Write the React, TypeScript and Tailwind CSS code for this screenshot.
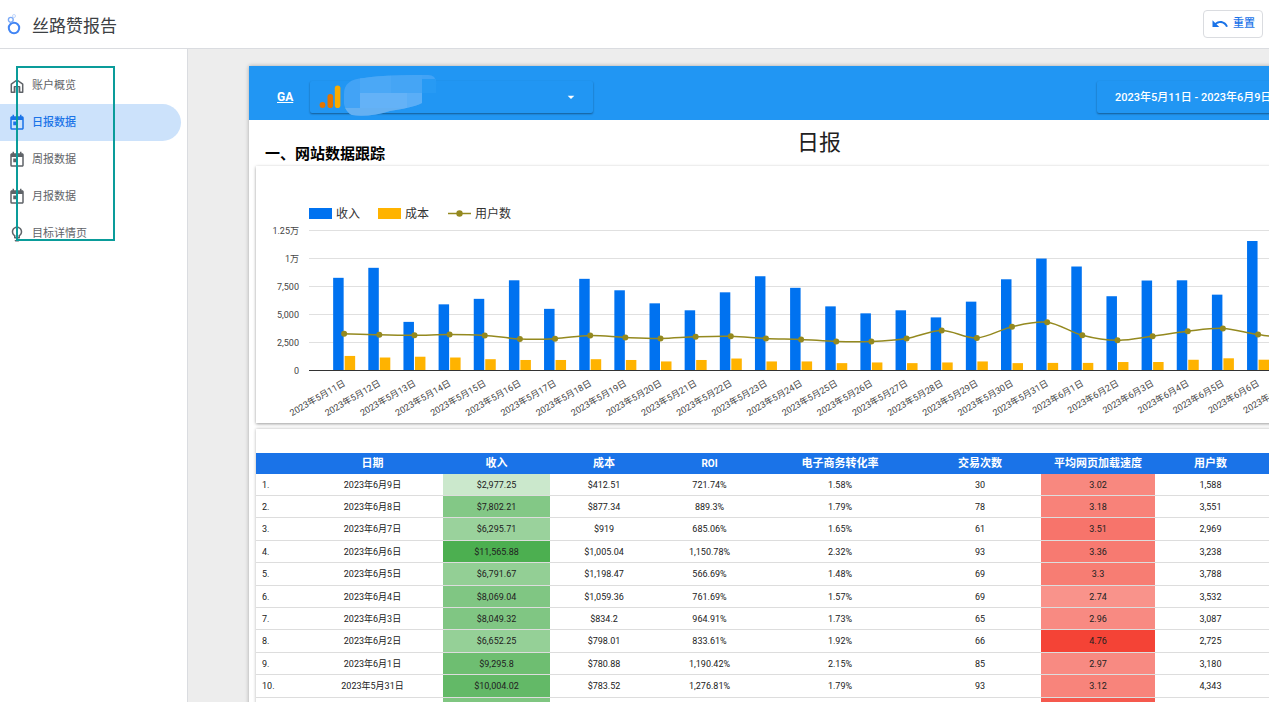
import { MdArrowDropDown, MdLightbulbOutline, MdToday, MdUndo } from 'react-icons/md'

interface DailyPoint {
  date: string
  revenue: number
  cost: number
  users: number
}

interface ReportRow {
  date: string
  revenue: number
  cost: string
  roi: string
  conversion: string
  orders: number
  speed: number
  users: string
}

const daily: DailyPoint[] = [
  { date: '2023年5月11日', revenue: 8290, cost: 1340, users: 3325 },
  { date: '2023年5月12日', revenue: 9180, cost: 1200, users: 3218 },
  { date: '2023年5月13日', revenue: 4370, cost: 1270, users: 3174 },
  { date: '2023年5月14日', revenue: 5930, cost: 1200, users: 3254 },
  { date: '2023年5月15日', revenue: 6420, cost: 1050, users: 3165 },
  { date: '2023年5月16日', revenue: 8070, cost: 980, users: 2853 },
  { date: '2023年5月17日', revenue: 5530, cost: 980, users: 2880 },
  { date: '2023年5月18日', revenue: 8200, cost: 1050, users: 3165 },
  { date: '2023年5月19日', revenue: 7180, cost: 980, users: 2987 },
  { date: '2023年5月20日', revenue: 6020, cost: 850, users: 2898 },
  { date: '2023年5月21日', revenue: 5400, cost: 980, users: 3049 },
  { date: '2023年5月22日', revenue: 7000, cost: 1110, users: 3094 },
  { date: '2023年5月23日', revenue: 8430, cost: 850, users: 2898 },
  { date: '2023年5月24日', revenue: 7400, cost: 850, users: 2809 },
  { date: '2023年5月25日', revenue: 5750, cost: 700, users: 2630 },
  { date: '2023年5月26日', revenue: 5130, cost: 760, users: 2630 },
  { date: '2023年5月27日', revenue: 5400, cost: 700, users: 2898 },
  { date: '2023年5月28日', revenue: 4770, cost: 760, users: 3611 },
  { date: '2023年5月29日', revenue: 6170, cost: 850, users: 2942 },
  { date: '2023年5月30日', revenue: 8160, cost: 700, users: 3941 },
  { date: '2023年5月31日', revenue: 10004, cost: 720, users: 4343 },
  { date: '2023年6月1日', revenue: 9296, cost: 720, users: 3180 },
  { date: '2023年6月2日', revenue: 6652, cost: 798, users: 2725 },
  { date: '2023年6月3日', revenue: 8049, cost: 800, users: 3087 },
  { date: '2023年6月4日', revenue: 8069, cost: 1000, users: 3532 },
  { date: '2023年6月5日', revenue: 6792, cost: 1130, users: 3788 },
  { date: '2023年6月6日', revenue: 11566, cost: 1005, users: 3238 },
  { date: '2023年6月7日', revenue: 6296, cost: 919, users: 2969 },
  { date: '2023年6月8日', revenue: 7802, cost: 877, users: 3551 },
  { date: '2023年6月9日', revenue: 2977, cost: 413, users: 1588 },
]

const rows: ReportRow[] = [
  { date: '2023年6月9日', revenue: 2977.25, cost: '$412.51', roi: '721.74%', conversion: '1.58%', orders: 30, speed: 3.02, users: '1,588' },
  { date: '2023年6月8日', revenue: 7802.21, cost: '$877.34', roi: '889.3%', conversion: '1.79%', orders: 78, speed: 3.18, users: '3,551' },
  { date: '2023年6月7日', revenue: 6295.71, cost: '$919', roi: '685.06%', conversion: '1.65%', orders: 61, speed: 3.51, users: '2,969' },
  { date: '2023年6月6日', revenue: 11565.88, cost: '$1,005.04', roi: '1,150.78%', conversion: '2.32%', orders: 93, speed: 3.36, users: '3,238' },
  { date: '2023年6月5日', revenue: 6791.67, cost: '$1,198.47', roi: '566.69%', conversion: '1.48%', orders: 69, speed: 3.3, users: '3,788' },
  { date: '2023年6月4日', revenue: 8069.04, cost: '$1,059.36', roi: '761.69%', conversion: '1.57%', orders: 69, speed: 2.74, users: '3,532' },
  { date: '2023年6月3日', revenue: 8049.32, cost: '$834.2', roi: '964.91%', conversion: '1.73%', orders: 65, speed: 2.96, users: '3,087' },
  { date: '2023年6月2日', revenue: 6652.25, cost: '$798.01', roi: '833.61%', conversion: '1.92%', orders: 66, speed: 4.76, users: '2,725' },
  { date: '2023年6月1日', revenue: 9295.8, cost: '$780.88', roi: '1,190.42%', conversion: '2.15%', orders: 85, speed: 2.97, users: '3,180' },
  { date: '2023年5月31日', revenue: 10004.02, cost: '$783.52', roi: '1,276.81%', conversion: '1.79%', orders: 93, speed: 3.12, users: '4,343' },
]

const MAX_REVENUE = 11565.88
const MAX_SPEED = 4.76

function revenueColor(value: number): string {
  return `rgba(76, 175, 80, ${1 - (MAX_REVENUE - value) * 0.0000828})`
}

function speedColor(value: number): string {
  return `rgba(244, 67, 54, ${value / MAX_SPEED})`
}

function HomeIcon() {
  return (
    <svg viewBox="0 0 18 18" className="size-[18px] shrink-0" fill="none" aria-hidden="true">
      <path d="M3.3 15.2V7.2L9 3l5.7 4.2v8h-3.1V9.8H6.4v5.4z" stroke="currentColor" strokeWidth="1.5" strokeLinejoin="round" />
      <path d="M7.6 11h2.8v5H7.6z" fill="currentColor" />
    </svg>
  )
}

const navItems = [
  { label: '账户概览', icon: <HomeIcon /> },
  { label: '日报数据', icon: <MdToday className="size-[18px] shrink-0" />, active: true },
  { label: '周报数据', icon: <MdToday className="size-[18px] shrink-0" /> },
  { label: '月报数据', icon: <MdToday className="size-[18px] shrink-0" /> },
  { label: '目标详情页', icon: <MdLightbulbOutline className="size-[18px] shrink-0" /> },
]

function TopBar() {
  return (
    <header className="flex h-[49px] shrink-0 items-center justify-between border-b border-[#dadce0] pr-[6px] pl-[7px]">
      <div className="flex items-center gap-[11px]">
        <svg viewBox="0 0 14 22" className="h-[22px] w-[14px]" fill="none" aria-hidden="true">
          <circle cx="7" cy="15" r="5.2" stroke="#4285f4" strokeWidth="2" />
          <circle cx="3.8" cy="6.8" r="2.4" stroke="#7baaf7" strokeWidth="1.4" />
          <circle cx="7" cy="3" r="1.5" stroke="#c3d8fb" strokeWidth="1" />
        </svg>
        <h1 className="pt-1 text-[17px] leading-6 text-[#3c4043]">丝路赞报告</h1>
      </div>
      <button
        type="button"
        className="flex h-7 items-center gap-1 rounded border border-[#dadce0] px-[7px] text-[11px] font-medium text-[#1a73e8]"
      >
        <MdUndo className="size-[18px]" />
        <span className="pt-px">重置</span>
      </button>
    </header>
  )
}

function Sidebar() {
  return (
    <nav className="relative w-[188px] shrink-0 border-r border-[#dadce0] bg-white pt-[18px]">
      <ul>
        {navItems.map((item) => (
          <li key={item.label} className="pr-[6px]">
            <a
              href="#"
              aria-current={item.active ? 'page' : undefined}
              className={`flex h-[37px] items-center gap-[6px] rounded-r-full pl-2 text-[11px] ${
                item.active ? 'bg-[#cce2fb] font-medium text-[#1a73e8]' : 'text-[#5f6368]'
              }`}
            >
              {item.icon}
              <span className="pt-[2px]">{item.label}</span>
            </a>
          </li>
        ))}
      </ul>
      {/* highlight frame over the menu */}
      <div className="pointer-events-none absolute top-[17px] left-4 h-[175px] w-[99px] border-2 border-[#0a9c9a]" />
    </nav>
  )
}

function FilterBar() {
  return (
    <div className="flex h-[54px] items-center bg-[#2196f3] pt-2 pl-7 text-white">
      <a href="#" className="w-[33px] text-xs font-bold underline">
        GA
      </a>
      <div className="relative h-8 w-[283px] rounded-xs shadow-[0_1px_2px_rgba(0,0,0,0.4)]">
        <select aria-label="GA" className="h-full w-full appearance-none bg-transparent outline-none">
          <option value="" />
        </select>
        <MdArrowDropDown className="pointer-events-none absolute top-2 right-[14px] size-4" />
        <svg
          viewBox="0 0 130 44"
          className="pointer-events-none absolute -top-[7px] left-0 h-[44px] w-[130px]"
          aria-hidden="true"
        >
          <circle cx="12.5" cy="31" r="2.9" fill="#e37400" />
          <rect x="17.5" y="20" width="5.6" height="14" rx="2.8" fill="#e37400" />
          <rect x="24.8" y="11.5" width="5.6" height="22.5" rx="2.8" fill="#f9ab00" />
          <path d="M35 22v12l3 3z" fill="#9aa55f" />
          <clipPath id="smear">
            <path d="M34 20C34 10 40 5 54 4C72 1 100 1 118 1q9 0 8 10v8h-14v10c-8 4-20 6-32 8c-12 4-28 6-38 4C38 39 35 35 34 30z" />
          </clipPath>
          <g clipPath="url(#smear)">
            <rect width="130" height="44" fill="#42a3f6" />
            <rect x="50" y="0" width="31" height="19" fill="#4ba8f6" />
            <rect x="81" y="0" width="31" height="19" fill="#45a5f5" />
            <rect x="50" y="19" width="47" height="15" fill="#64b2f7" />
            <rect x="97" y="19" width="15" height="15" fill="#5aaef7" />
            <rect x="34" y="34" width="78" height="10" fill="#64b0f2" />
            <rect x="112" y="5" width="18" height="14" fill="#279af4" />
          </g>
        </svg>
      </div>
      <button
        type="button"
        className="mr-2 ml-auto h-8 w-[284px] rounded-xs pt-[2px] pl-[18px] text-left text-[11px] font-medium shadow-[0_1px_2px_rgba(0,0,0,0.4)]"
      >
        2023年5月11日 - 2023年6月9日
      </button>
    </div>
  )
}

// chart geometry, in px inside the card
const PLOT_LEFT = 53
const BASELINE = 205
const STEP = 35.15
const SCALE = 140.5 / 12500

const xAt = (i: number) => PLOT_LEFT + STEP * (i + 1)
const yAt = (value: number) => BASELINE - value * SCALE

function smoothPath(points: [number, number][]): string {
  let d = `M${points[0][0]} ${points[0][1]}`
  for (let i = 0; i < points.length - 1; i++) {
    const prev = points[i - 1] ?? points[i]
    const a = points[i]
    const b = points[i + 1]
    const next = points[i + 2] ?? b
    d += `C${a[0] + (b[0] - prev[0]) / 6} ${a[1] + (b[1] - prev[1]) / 6} ${b[0] - (next[0] - a[0]) / 6} ${b[1] - (next[1] - a[1]) / 6} ${b[0]} ${b[1]}`
  }
  return d
}

const ticks = [
  { value: 12500, label: '1.25万' },
  { value: 10000, label: '1万' },
  { value: 7500, label: '7,500' },
  { value: 5000, label: '5,000' },
  { value: 2500, label: '2,500' },
  { value: 0, label: '0' },
]

function RevenueChart() {
  const line = daily.map((point, i): [number, number] => [xAt(i), yAt(point.users)])

  return (
    <section className="h-[257px] bg-white shadow-[0_1px_3px_rgba(0,0,0,0.4)]">
      <svg width="1126" height="257" role="img" aria-label="收入、成本、用户数">
        <g fontSize="12" fill="#333333">
          <rect x="53" y="42" width="23" height="11" fill="#0072f0" />
          <text x="80" y="52">收入</text>
          <rect x="122" y="42" width="23" height="11" fill="#ffb300" />
          <text x="149" y="52">成本</text>
          <path d="M192 47.5h23" stroke="#94891f" strokeWidth="1.5" />
          <circle cx="203.5" cy="47.5" r="3.2" fill="#94891f" />
          <text x="219" y="52">用户数</text>
        </g>
        {ticks.map((tick) => (
          <g key={tick.value}>
            <path
              d={`M${PLOT_LEFT} ${Math.round(yAt(tick.value)) - 0.5}H1120`}
              stroke={tick.value === 0 ? '#333333' : '#e0e0e0'}
            />
            <text x="43" y={yAt(tick.value) + 3} fontSize="9" fill="#444444" textAnchor="end">
              {tick.label}
            </text>
          </g>
        ))}
        {daily.map((point, i) => (
          <g key={point.date}>
            <rect x={xAt(i) - 11} y={yAt(point.revenue)} width="10.5" height={point.revenue * SCALE - 1} fill="#0072f0" />
            <rect x={xAt(i) + 0.5} y={yAt(point.cost)} width="10.5" height={point.cost * SCALE - 1} fill="#ffb300" />
            <text
              transform={`translate(${xAt(i) + 2} 219) rotate(-30)`}
              fontSize="9"
              fill="#444444"
              textAnchor="end"
            >
              {point.date}
            </text>
          </g>
        ))}
        <path d={smoothPath(line)} fill="none" stroke="#94891f" strokeWidth="1.5" />
        {line.map(([x, y]) => (
          <circle key={x} cx={x} cy={y} r="3" fill="#94891f" />
        ))}
      </svg>
    </section>
  )
}

function ReportTable() {
  return (
    <section className="mt-[6px] bg-white pt-6 shadow-[0_0_3px_rgba(0,0,0,0.3)]">
      <table className="w-full table-fixed border-separate border-spacing-0 text-center text-[9px] leading-3 text-[#212121]">
        <colgroup>
          <col className="w-[46px]" />
          <col className="w-[141px]" />
          <col className="w-[107px]" />
          <col className="w-[108px]" />
          <col className="w-[103px]" />
          <col className="w-[158px]" />
          <col className="w-[122px]" />
          <col className="w-[114px]" />
          <col className="w-[111px]" />
          <col />
        </colgroup>
        <thead>
          <tr className="h-[21px] bg-[#1a73e8] text-[11px] text-white">
            <td />
            <th>日期</th>
            <th>收入</th>
            <th>成本</th>
            <th className="text-[10px]">ROI</th>
            <th>电子商务转化率</th>
            <th>交易次数</th>
            <th>平均网页加载速度</th>
            <th>用户数</th>
            <td />
          </tr>
        </thead>
        <tbody>
          {rows.map((row, i) => (
            <tr key={row.date} className="h-[22px] *:border-b *:border-[#dddddd] nth-[5n]:h-[23px] nth-[5n+3]:h-[23px]">
              <td className="pl-[6px] text-left">{i + 1}.</td>
              <td>{row.date}</td>
              <td style={{ backgroundColor: revenueColor(row.revenue) }}>${row.revenue.toLocaleString('en-US')}</td>
              <td>{row.cost}</td>
              <td>{row.roi}</td>
              <td>{row.conversion}</td>
              <td>{row.orders}</td>
              <td style={{ backgroundColor: speedColor(row.speed) }}>{row.speed}</td>
              <td>{row.users}</td>
              <td />
            </tr>
          ))}
          <tr className="h-[22px]">
            <td colSpan={2} />
            <td style={{ backgroundColor: revenueColor(8160) }} />
            <td colSpan={4} />
            <td style={{ backgroundColor: speedColor(4.2) }} />
            <td colSpan={2} />
          </tr>
        </tbody>
      </table>
    </section>
  )
}

export default function App() {
  return (
    <div className="flex h-screen flex-col overflow-hidden bg-white pb-[13px] font-['Roboto','Noto_Sans_CJK_SC',sans-serif]">
      <TopBar />
      <div className="flex min-h-0 flex-1">
        <Sidebar />
        <main className="min-w-0 flex-1 overflow-hidden bg-[#ededed] pt-[17px] pl-[61px]">
          <div className="min-h-full min-w-[1140px] bg-white shadow-[0_0_4px_rgba(0,0,0,0.3)]">
            <FilterBar />
            <div className="grid h-[46px] grid-cols-3 items-center pl-4">
              <h2 className="pt-[22px] text-[15px] leading-6 font-bold text-black">一、网站数据跟踪</h2>
              <p className="pr-4 text-center text-[22px] leading-8 text-[#212121]">日报</p>
            </div>
            <div className="px-[7px]">
              <RevenueChart />
              <ReportTable />
            </div>
          </div>
        </main>
      </div>
    </div>
  )
}
